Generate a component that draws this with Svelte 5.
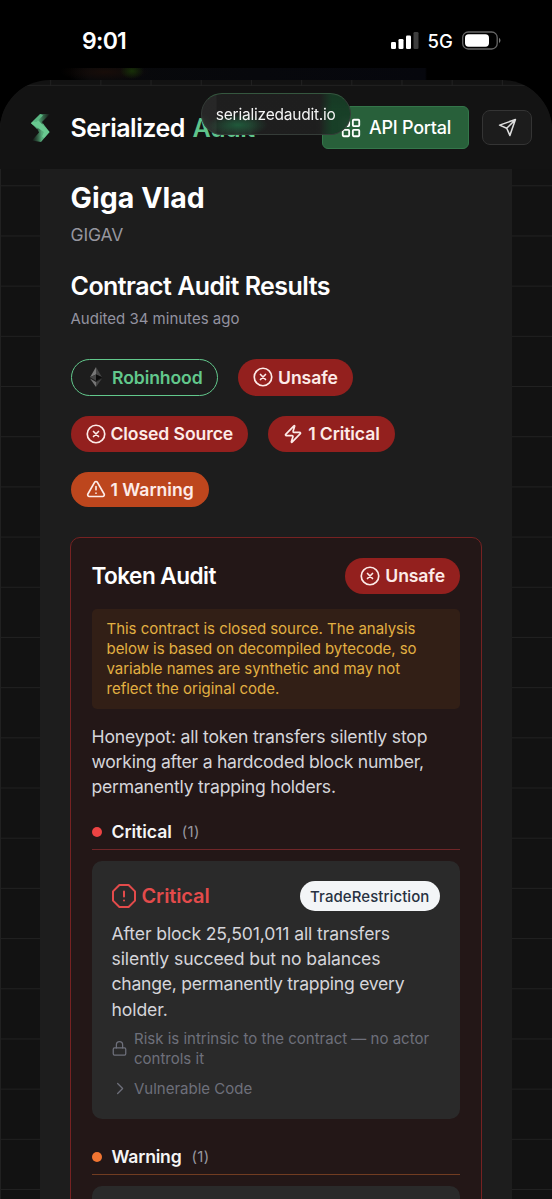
<script>
  const badges = [
    { kind: 'chain', icon: 'eth', label: 'Robinhood' },
    { kind: 'danger tall', icon: 'x', label: 'Unsafe' },
    { kind: 'danger', icon: 'x', label: 'Closed Source' },
    { kind: 'danger', icon: 'zap', label: '1 Critical' },
    { kind: 'warn', icon: 'tri', label: '1 Warning' }
  ];
  // Each line carries its own tracking in px.
  const note = [
    ['This contract is closed source. The analysis', -0.03],
    ['below is based on decompiled bytecode, so', -0.04],
    ['variable names are synthetic and may not', -0.04],
    ['reflect the original code.', 0]
  ];
  const summary = [
    ['Honeypot: all token transfers silently stop', -0.19],
    ['working after a hardcoded block number,', -0.26],
    ['permanently trapping holders.', -0.22]
  ];
  const finding = [
    ['After block 25,501,011 all transfers', -0.12],
    ['silently succeed but no balances', -0.1],
    ['change, permanently trapping every', -0.26],
    ['holder.', -0.1]
  ];
</script>

{#snippet icon(name, size)}
  <svg class="ico" width={size} height={size} viewBox="0 0 24 24" fill="none" stroke="currentColor" stroke-width="2" stroke-linecap="round" stroke-linejoin="round">
    {#if name === 'x'}
      <circle cx="12" cy="12" r="10.5" /><path d="m15 9-6 6M9 9l6 6" />
    {:else if name === 'zap'}
      <path d="M4 14a1 1 0 0 1-.78-1.63l9.9-10.2a.5.5 0 0 1 .86.46l-1.92 6.02A1 1 0 0 0 13 10h7a1 1 0 0 1 .78 1.63l-9.9 10.2a.5.5 0 0 1-.86-.46l1.92-6.02A1 1 0 0 0 11 14z" />
    {:else if name === 'tri'}
      <path d="m21.73 18-8-14a2 2 0 0 0-3.48 0l-8 14A2 2 0 0 0 4 21h16a2 2 0 0 0 1.73-3M12 9v4M12 17h.01" />
    {:else if name === 'oct'}
      <path d="M7.400 1h9.200L23 7.400v9.200L16.600 23H7.400L1 16.600V7.400zM12 7.500v5M12 16.500h.01" />
    {:else if name === 'lock'}
      <rect x="2" y="11" width="20" height="11.500" rx="2" /><path d="M7 11V6a5 5 0 0 1 10 0v5" />
    {:else if name === 'chev'}
      <path d="m9 20 8-8-8-8" />
    {:else if name === 'grid'}
      <rect x="3" y="3" width="7" height="7" rx="1" /><rect x="14" y="3" width="7" height="7" rx="1" /><rect x="14" y="14" width="7" height="7" rx="1" /><rect x="3" y="14" width="7" height="7" rx="1" />
    {:else if name === 'send'}
      <path d="M22 2 15 22l-4-9-9-4ZM22 2 11 13" />
    {/if}
  </svg>
{/snippet}

{#snippet lines(rows)}
  {#each rows as [text, track]}<div style:letter-spacing="{track}px">{text}</div>{/each}
{/snippet}

<div class="screen">
  <div class="status">
    <span class="time">9:01</span>
    <div class="signals">
      <svg width="28" height="20" viewBox="0 0 28 20">
        <rect x="0" y="11" width="5" height="7" rx="1.3" fill="#fff" />
        <rect x="7.500" y="8" width="5" height="10" rx="1.3" fill="#fff" />
        <rect x="15" y="4.500" width="5" height="13.500" rx="1.3" fill="#fff" />
        <rect x="22.500" y="1" width="5" height="17" rx="1.3" fill="#3d3d3d" />
      </svg>
      <span class="net">5G</span>
      <svg class="bat" width="40" height="20" viewBox="0 0 40 20">
        <rect x=".7" y="1" width="34.500" height="17" rx="5.500" fill="none" stroke="#666" stroke-width="1.300" />
        <rect x="3" y="3.300" width="24" height="12.400" rx="3.600" fill="#fff" />
        <path d="M37 6.800q3 2.700 0 5.400z" fill="#777" />
      </svg>
    </div>
  </div>
  <div class="sliver"></div>

  <div class="shell">
    <header>
      <svg class="logo" width="22" height="30" viewBox="0 0 22 30">
        <defs>
          <linearGradient id="lg" x1="0" x2="1" y1="0" y2="0">
            <stop offset="0" stop-color="#6bd096" /><stop offset=".45" stop-color="#4a9a6c" /><stop offset="1" stop-color="#3a7a55" stop-opacity="0" />
          </linearGradient>
          <linearGradient id="lh" x1="1" x2="0" y1="0" y2="0">
            <stop offset="0" stop-color="#6bd096" /><stop offset=".45" stop-color="#55a878" /><stop offset="1" stop-color="#3a7a55" stop-opacity="0" />
          </linearGradient>
        </defs>
        <path d="M1 10 10 1H20l-8 8 2 3-7 4z" fill="url(#lg)" />
        <path d="m19.500 19-8.500 10-9-1.500 7-8-2-4 6-5z" fill="url(#lh)" />
        <path d="m1 10.500 5.500-5L19.500 19l-5.500 6-2-1.500 2-4.500z" fill="#69c990" />
        <path d="M3 8.500 10.500 1l2.500 1.500L6.500 9z" fill="#59b581" />
      </svg>
      <div class="brand"><span>Serialized</span> <span class="b2">Audit</span></div>
      <div class="api">{@render icon('grid', 22)}<span>API Portal</span></div>
      <div class="send">{@render icon('send', 19)}</div>
      <div class="urlpill"><span>serializedaudit.io</span></div>
    </header>

    <main>
      <h1>Giga Vlad</h1>
      <div class="symbol">GIGAV</div>
      <h2>Contract Audit Results</h2>
      <div class="ago">Audited 34 minutes ago</div>

      <div class="badges">
        {#each badges as b}
          <div class="pill {b.kind}">
            {#if b.icon === 'eth'}
              <svg class="ico" width="20" height="20" viewBox="0 0 20 20">
                <path d="M10 0 4 10.200l6-2.700z" fill="#777" /><path d="m10 0 6 10.200-6-2.700z" fill="#444" />
                <path d="m4 10.200 6-2.700v6.200z" fill="#444" /><path d="m16 10.200-6-2.700v6.200z" fill="#0b0b0b" />
                <path d="m4 11.500 6 3.500v5z" fill="#777" /><path d="m16 11.500-6 3.500v5z" fill="#444" />
              </svg>
            {:else}
              {@render icon(b.icon, 20)}
            {/if}
            <span>{b.label}</span>
          </div>
        {/each}
      </div>

      <section>
        <div class="head">
          <h3>Token Audit</h3>
          <div class="pill danger">{@render icon('x', 20)}<span>Unsafe</span></div>
        </div>
        <div class="note">{@render lines(note)}</div>
        <div class="summary">{@render lines(summary)}</div>

        <div class="group critical"><i></i><b>Critical</b><em>(1)</em></div>
        <article>
          <div class="title">
            {@render icon('oct', 24)}<strong>Critical</strong>
            <div class="tag">TradeRestriction</div>
          </div>
          <div class="finding">{@render lines(finding)}</div>
          <div class="meta">
            {@render icon('lock', 15)}
            <div><div>Risk is intrinsic to the contract — no actor</div><div>controls it</div></div>
          </div>
          <div class="meta code">{@render icon('chev', 15)}<div>Vulnerable Code</div></div>
        </article>

        <div class="group warning"><i></i><b>Warning</b><em>(1)</em></div>
        <article></article>
      </section>
    </main>
  </div>
</div>

<style>
  :global(body) { background: #000; }
  * { box-sizing: border-box; }
  .screen { width: 552px; height: 1199px; overflow: hidden; display: flex; flex-direction: column; background: #000; color: #fff; font-family: Inter, "Liberation Sans", sans-serif; white-space: nowrap; }
  .ico { display: block; flex: none; }
  .status { height: 68px; flex: none; display: flex; justify-content: space-between; align-items: flex-start; padding: 28px 50.500px 0 82px; }
  .signals { display: flex; align-items: center; height: 27px; }
  .signals svg { display: block; margin-top: -1px; }
  .time { font-size: 23px; line-height: 27px; font-weight: 600; letter-spacing: -0.7px; }
  .net { font-size: 18.500px; line-height: 27px; font-weight: 500; margin-left: 9px; letter-spacing: 0.1px; }
  .bat { margin-left: 8.500px; }
  .sliver { height: 12px; flex: none; background: radial-gradient(ellipse 12px 8px at 132px 3px, #173008, transparent), radial-gradient(ellipse 45px 10px at 105px 4px, #180d09, transparent), linear-gradient(90deg, transparent 70px, #08090b 90px, #06070d 425px, #000 427px); }
  .shell { flex: 1; min-height: 0; overflow: hidden; border-radius: 50px 50px 0 0; background-color: #121212; background-image: linear-gradient(#212121 1.2px, transparent 1.2px), linear-gradient(90deg, #212121 1px, transparent 1px); background-size: 50.2px 50.2px; background-position: 0 4.900px; }
  header { position: relative; height: 89px; display: flex; align-items: center; padding: 6px 20px 0 30px; background: linear-gradient(transparent 6px, #131313 6px); }
  .logo { flex: none; margin-right: 18.500px; }
  .brand { font-size: 25px; line-height: 34px; font-weight: 600; letter-spacing: -0.5px; width: 252px; }
  .b2 { color: #5fc48b; margin-left: 2px; }
  .api { height: 43px; width: 147px; flex: none; border-radius: 6px; border: 1px solid #34764a; background: #28603a; display: flex; align-items: center; gap: 7px; padding-left: 17px; font-size: 18px; font-weight: 500; letter-spacing: -0.25px; }
  .send { width: 50px; height: 35px; flex: none; margin-left: 13px; border: 1px solid #343434; border-radius: 8px; background: #1c1c1c; display: flex; justify-content: center; align-items: center; color: #ddd; }
  .urlpill { position: absolute; left: 201px; top: 13px; width: 149.500px; height: 42px; border-radius: 21px; border: 1px solid #353c38; border-top-color: #35573f; background: linear-gradient(90deg, #2a2a2ae0 14px, #202020e8 15px, #202020e8 118px, #173d26f2 130px); backdrop-filter: blur(3px); display: flex; align-items: center; justify-content: center; font-size: 15.500px; letter-spacing: -0.22px; color: #f4f4f4; }
  .urlpill::before { content: ""; position: absolute; inset: 0; border-radius: 21px; background: radial-gradient(ellipse 30px 11px at 36px 31px, #1f7045b0, transparent); }
  .urlpill span { position: relative; }
  main { margin: 0 40px; padding: 9px 30.500px 0; height: 1040px; background: #1d1d1d; }
  h1, h2, h3 { margin: 0; }
  h1 { font-size: 28.500px; line-height: 40px; font-weight: 700; letter-spacing: 0.05px; }
  .symbol { margin-top: 4px; font-size: 17.500px; line-height: 26px; letter-spacing: -0.15px; color: #96969f; }
  h2 { margin-top: 23px; font-size: 25px; line-height: 30px; font-weight: 600; letter-spacing: -0.54px; }
  .ago { margin-top: 8px; font-size: 15px; line-height: 20px; color: #9393a0; }
  .badges { margin-top: 29.500px; display: flex; flex-wrap: wrap; gap: 20px; }
  .pill { height: 35.500px; flex: none; border-radius: 18px; padding: 0 15px; display: flex; align-items: center; gap: 5px; font-size: 17.600px; font-weight: 600; letter-spacing: -0.1px; color: #fdebe8; }
  .danger { background: #93201e; }
  .tall, .chain { height: 37.500px; border-radius: 19px; }
  .warn { background: #bd461d; letter-spacing: 0; }
  .chain { border: 1.5px solid #62c88c; color: #62c88c; padding: 0 14.500px; gap: 6px; }
  section { margin: 30px 0 0 -.5px; height: 690px; border: 1.250px solid #762222; border-radius: 10px; padding: 20px 20.500px; background: #231717; }
  .head { display: flex; align-items: center; justify-content: space-between; }
  h3 { font-size: 22.600px; line-height: 30px; font-weight: 600; letter-spacing: -0.55px; }
  .note { margin-top: 15px; height: 100.500px; border-radius: 5px; background: #321f16; padding: 10px 15px; font-size: 15px; line-height: 20px; color: #e2b042; }
  .summary { margin-top: 15px; font-size: 17.600px; line-height: 25.100px; color: #d5d5da; }
  .group { display: flex; align-items: center; height: 25px; box-sizing: content-box; margin-top: 20px; padding-bottom: 5px; border-bottom: 1px solid #702628; }
  .group i { width: 10px; height: 10px; border-radius: 50%; background: #ec4343; margin-right: 10px; }
  .group b { font-size: 17.600px; font-weight: 600; letter-spacing: -0.05px; color: #f5f5f5; }
  .group em { font-style: normal; font-size: 15px; letter-spacing: 0.3px; color: #9797a0; margin-left: 10px; }
  .group.warning { border-color: #713c21; margin-top: 25.500px; }
  .warning i { background: #f17532; }
  .group.warning b { letter-spacing: -0.2px; }
  article { margin-top: 10.500px; height: 258px; border-radius: 10px; background: #2a2a2a; padding: 20px; }
  .title { display: flex; align-items: center; height: 30.500px; color: #e34b4b; }
  .title strong { margin-left: 6px; font-size: 20px; font-weight: 600; letter-spacing: -0.12px; }
  .tag { margin-left: auto; width: 140.500px; height: 30.500px; border-radius: 16px; background: #f3f5f7; color: #273141; display: flex; align-items: center; justify-content: center; font-size: 15px; font-weight: 500; letter-spacing: 0.07px; }
  .finding { margin-top: 10px; font-size: 17.600px; line-height: 25.100px; color: #d5d5da; }
  .meta { display: flex; align-items: center; gap: 7.500px; margin-top: 7px; font-size: 15px; line-height: 20px; color: #6e707b; }
  .code { margin-top: 10px; }
</style>
